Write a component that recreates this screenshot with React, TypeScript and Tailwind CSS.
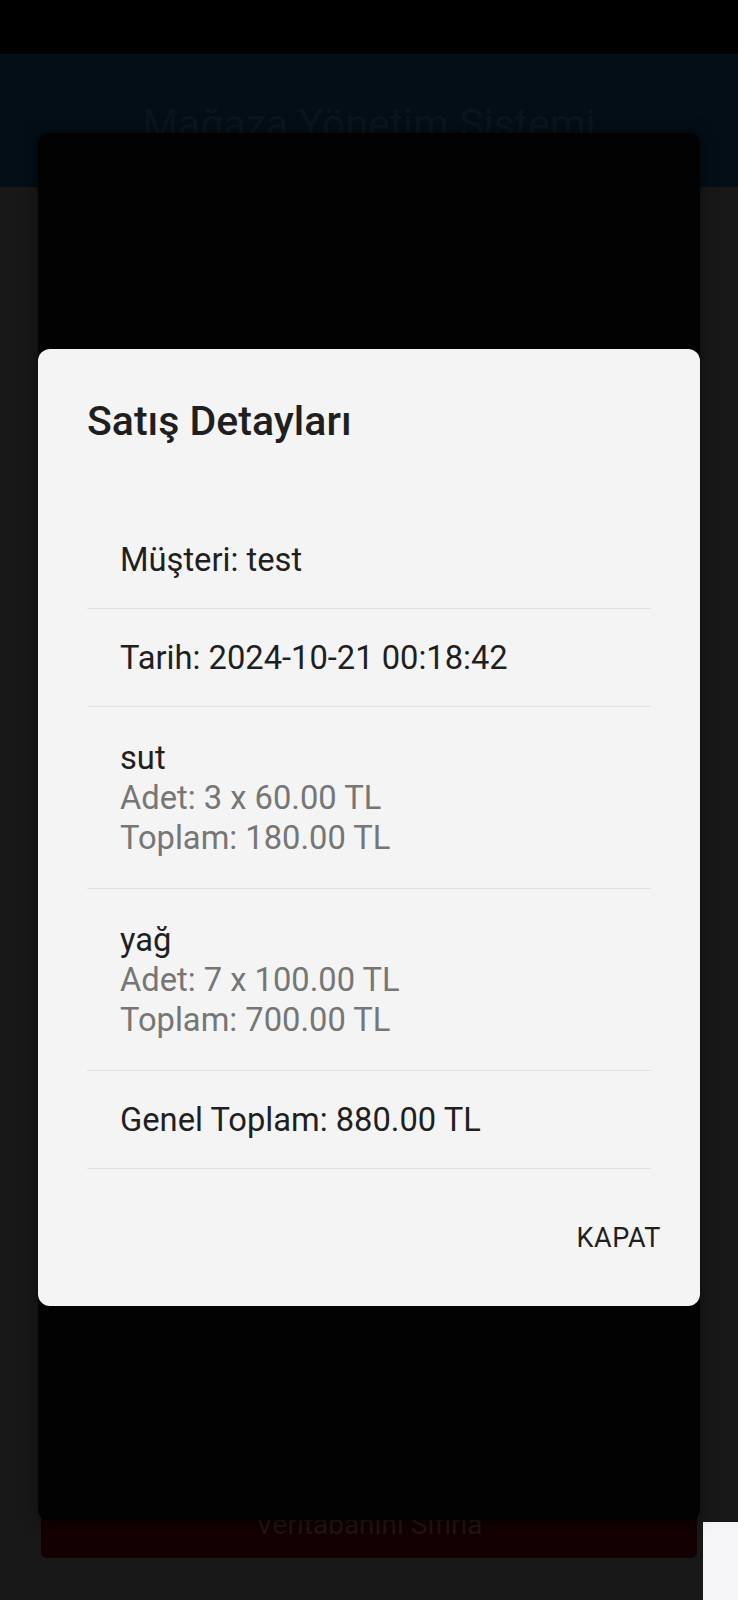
import React from "react";

type Line = { text: string; muted?: boolean };
type Row = { lines: Line[] };

const rows: Row[] = [
    { lines: [{ text: "Müşteri: test" }] },
    { lines: [{ text: "Tarih: 2024-10-21 00:18:42" }] },
    {
        lines: [
            { text: "sut" },
            { text: "Adet: 3 x 60.00 TL", muted: true },
            { text: "Toplam: 180.00 TL", muted: true },
        ],
    },
    {
        lines: [
            { text: "yağ" },
            { text: "Adet: 7 x 100.00 TL", muted: true },
            { text: "Toplam: 700.00 TL", muted: true },
        ],
    },
    { lines: [{ text: "Genel Toplam: 880.00 TL" }] },
];

const DetailRow: React.FC<{ row: Row }> = ({ row }) => {
    const tall = row.lines.length > 1;
    return (
        <div
            className={`flex flex-col justify-center px-[33px] border-b border-[#e2e2e2] ${
                tall ? "h-[182px]" : "h-[98px]"
            }`}
        >
            {row.lines.map((l, i) => (
                <p
                    key={i}
                    className={`text-[32.7px] leading-[40px] ${l.muted ? "text-[#767676]" : "text-[#1f1f1f]"}`}
                >
                    {l.text}
                </p>
            ))}
        </div>
    );
};

const App: React.FC = () => {
    return (
        <div
            className="relative w-full h-[1600px] overflow-hidden bg-[#181818]"
            style={{ fontFamily: "Roboto, 'Noto Sans', sans-serif" }}
        >
            <div className="h-[54px] bg-black"></div>
            <div className="h-[133px] bg-[#030e17] flex justify-center pt-[46px]">
                <p className="text-[41px] leading-[48px] text-[#0a151d]">Mağaza Yönetim Sistemi</p>
            </div>
            <div className="flex flex-col justify-end h-[1413px] pb-[42px] pl-[41px] pr-[41px]">
                <div className="h-[68px] rounded-md bg-[#130000] flex items-center justify-center pt-[2px]">
                    <p className="text-[28px] text-[#1f1515]">Veritabanını Sıfırla</p>
                </div>
            </div>

            {/* white chip at the bottom right */}
            <div className="absolute right-0 bottom-0 w-[35px] h-[78px] bg-[#f5f5f7]"></div>

            {/* dimmed modal layer */}
            <div className="absolute left-[38px] top-[133px] w-[662px] h-[1387px] rounded-[10px] bg-[#020202] shadow-[0_0_16px_rgba(0,0,0,0.5)]">
                <div className="mt-[216px] h-[957px] rounded-[12px] bg-[#f4f4f4] flex flex-col">
                    <div className="px-[49px] pt-[48px]">
                        <p className="text-[41px] leading-[48px] font-medium text-[#1f1f1f]">Satış Detayları</p>
                        <div className="mt-[66px] flex flex-col">
                            {rows.map((r, i) => (
                                <DetailRow key={i} row={r}></DetailRow>
                            ))}
                        </div>
                    </div>
                    <div className="flex justify-end pr-[39px] pt-[53px]">
                        <button className="text-[27px] leading-[32px] text-[#1f1f1f] tracking-[0.02em]">KAPAT</button>
                    </div>
                </div>
            </div>
        </div>
    );
};

export default App;
